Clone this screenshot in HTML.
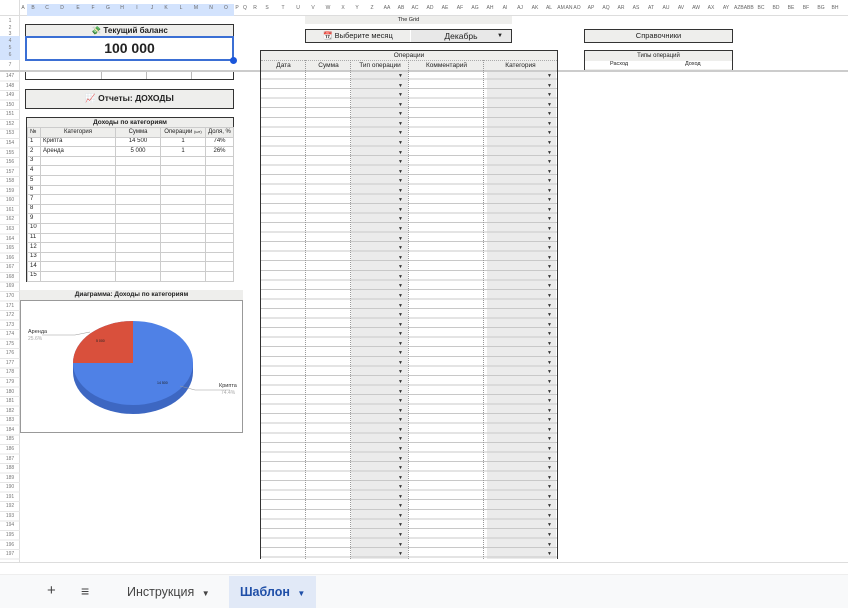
<!DOCTYPE html>
<html><head><meta charset="utf-8"><style>
*{margin:0;padding:0;box-sizing:border-box}
body{width:848px;height:608px;overflow:hidden;background:#fff;font-family:"Liberation Sans",Arial,sans-serif;position:relative;color:#222}
.a{position:absolute}
.ch{position:absolute;top:5px;font-size:5px;color:#666;text-align:center;width:14px;margin-left:-7px}
.rn{position:absolute;left:0;width:20px;font-size:5px;color:#777;text-align:center}
.box{position:absolute;border:1.5px solid #333;background:#eeeeec}
.c{text-align:center}
.t{border-collapse:collapse;position:absolute;table-layout:fixed}
.t tr{height:9.6px}
.t td{border:1px solid #ccc;font-size:6px;padding:0 2px;line-height:7.5px;white-space:nowrap;overflow:hidden}
.col{position:absolute;font-size:6px;color:#333;line-height:9.56px;text-align:right}
</style></head><body>
<div class="a" style="left:0;top:0;width:848px;height:16px;background:#fff;border-bottom:1px solid #ddd"></div>
<div class="a" style="left:27px;top:4px;width:207px;height:12px;background:#d3e3fd"></div>
<div class="a" style="left:0;top:0;width:20px;height:608px;border-right:1px solid #ddd"></div>
<div class="ch" style="left:23px">A</div><div class="ch" style="left:33px">B</div><div class="ch" style="left:47px">C</div><div class="ch" style="left:62px">D</div><div class="ch" style="left:78px">E</div><div class="ch" style="left:93px">F</div><div class="ch" style="left:108px">G</div><div class="ch" style="left:122px">H</div><div class="ch" style="left:137px">I</div><div class="ch" style="left:152px">J</div><div class="ch" style="left:166px">K</div><div class="ch" style="left:181px">L</div><div class="ch" style="left:196px">M</div><div class="ch" style="left:211px">N</div><div class="ch" style="left:226px">O</div><div class="ch" style="left:237px">P</div><div class="ch" style="left:245px">Q</div><div class="ch" style="left:255px">R</div><div class="ch" style="left:267px">S</div><div class="ch" style="left:283px">T</div><div class="ch" style="left:298px">U</div><div class="ch" style="left:313px">V</div><div class="ch" style="left:328px">W</div><div class="ch" style="left:343px">X</div><div class="ch" style="left:357px">Y</div><div class="ch" style="left:372px">Z</div><div class="ch" style="left:387px">AA</div><div class="ch" style="left:401px">AB</div><div class="ch" style="left:415px">AC</div><div class="ch" style="left:430px">AD</div><div class="ch" style="left:445px">AE</div><div class="ch" style="left:460px">AF</div><div class="ch" style="left:475px">AG</div><div class="ch" style="left:490px">AH</div><div class="ch" style="left:505px">AI</div><div class="ch" style="left:520px">AJ</div><div class="ch" style="left:535px">AK</div><div class="ch" style="left:549px">AL</div><div class="ch" style="left:561px">AM</div><div class="ch" style="left:569px">AN</div><div class="ch" style="left:577px">AO</div><div class="ch" style="left:591px">AP</div><div class="ch" style="left:606px">AQ</div><div class="ch" style="left:621px">AR</div><div class="ch" style="left:636px">AS</div><div class="ch" style="left:651px">AT</div><div class="ch" style="left:666px">AU</div><div class="ch" style="left:681px">AV</div><div class="ch" style="left:696px">AW</div><div class="ch" style="left:711px">AX</div><div class="ch" style="left:726px">AY</div><div class="ch" style="left:741px">AZBABB</div><div class="ch" style="left:761px">BC</div><div class="ch" style="left:776px">BD</div><div class="ch" style="left:791px">BE</div><div class="ch" style="left:806px">BF</div><div class="ch" style="left:821px">BG</div><div class="ch" style="left:835px">BH</div>
<div class="a" style="left:0;top:36px;width:20px;height:24px;background:#d3e3fd"></div>
<div class="rn" style="top:18px">1</div><div class="rn" style="top:25px">2</div><div class="rn" style="top:31px">3</div><div class="rn" style="top:38px">4</div><div class="rn" style="top:45px">5</div><div class="rn" style="top:52px">6</div><div class="rn" style="top:62px">7</div>
<div class="a" style="left:0;top:70px;width:848px;height:2px;background:#ccc"></div>
<div class="a" style="left:0;top:72px;width:20px;font-size:5px;color:#777;text-align:center;line-height:9.56px">147<br>148<br>149<br>150<br>151<br>152<br>153<br>154<br>155<br>156<br>157<br>158<br>159<br>160<br>161<br>162<br>163<br>164<br>165<br>166<br>167<br>168<br>169<br>170<br>171<br>172<br>173<br>174<br>175<br>176<br>177<br>178<br>179<br>180<br>181<br>182<br>183<br>184<br>185<br>186<br>187<br>188<br>189<br>190<br>191<br>192<br>193<br>194<br>195<br>196<br>197</div>
<div class="a" style="left:0;top:72px;width:20px;height:488px;background:repeating-linear-gradient(#0000 0 8.56px,#e6e6e6 8.56px 9.56px)"></div>
<div class="box" style="left:25px;top:24px;width:209px;height:13px;font-size:8px;font-weight:bold;text-align:center;line-height:11px">💸 Текущий баланс</div>
<div class="a" style="left:25px;top:36px;width:209px;height:25px;border:2px solid #3b6fd4;background:#fff;font-size:14px;font-weight:bold;text-align:center;line-height:21px">100 000</div>
<div class="a" style="left:230px;top:57px;width:7px;height:7px;border-radius:50%;background:#1a56db"></div>
<div class="a" style="left:25px;top:72px;width:209px;height:8px;border:1.5px solid #333;border-top:none;background:linear-gradient(90deg,#0000 75px,#bbb 75px 76px,#0000 76px 120px,#bbb 120px 121px,#0000 121px 165px,#bbb 165px 166px,#0000 166px)"></div>
<div class="box" style="left:25px;top:89px;width:209px;height:20px;font-size:8.5px;font-weight:bold;text-align:center;line-height:17px">📈 Отчеты: ДОХОДЫ</div>
<div class="a" style="left:26px;top:117px;width:208px;height:165px;border:1.5px solid #333"></div>
<div class="a" style="left:27px;top:118px;width:206px;height:9px;background:#eeeeec;font-size:6.5px;font-weight:bold;text-align:center;line-height:9px">Доходы по категориям</div>
<table class="t" style="left:27px;top:127px;width:206px">
<colgroup><col style="width:13px"><col style="width:75px"><col style="width:45px"><col style="width:45px"><col style="width:28px"></colgroup>
<tr style="background:#eeeeec"><td>№</td><td class="c">Категория</td><td class="c">Сумма</td><td class="c">Операции <span style="font-size:4px">(шт)</span></td><td class="c" style="padding:0">Доля, %</td></tr>
<tr><td>1</td><td>Крипта</td><td class="c">14 500</td><td class="c">1</td><td class="c">74%</td></tr>
<tr><td>2</td><td>Аренда</td><td class="c">5 000</td><td class="c">1</td><td class="c">26%</td></tr>
<tr><td>3</td><td></td><td></td><td></td><td></td></tr><tr><td>4</td><td></td><td></td><td></td><td></td></tr><tr><td>5</td><td></td><td></td><td></td><td></td></tr><tr><td>6</td><td></td><td></td><td></td><td></td></tr><tr><td>7</td><td></td><td></td><td></td><td></td></tr><tr><td>8</td><td></td><td></td><td></td><td></td></tr><tr><td>9</td><td></td><td></td><td></td><td></td></tr><tr><td>10</td><td></td><td></td><td></td><td></td></tr><tr><td>11</td><td></td><td></td><td></td><td></td></tr><tr><td>12</td><td></td><td></td><td></td><td></td></tr><tr><td>13</td><td></td><td></td><td></td><td></td></tr><tr><td>14</td><td></td><td></td><td></td><td></td></tr><tr><td>15</td><td></td><td></td><td></td><td></td></tr>
</table>
<div class="a" style="left:20px;top:290px;width:223px;height:10px;background:#eeeeec;font-size:6.5px;font-weight:bold;text-align:center;line-height:10px">Диаграмма: Доходы по категориям</div>
<div class="a" style="left:20px;top:300px;width:223px;height:133px;border:1px solid #999;background:#fff"></div>
<svg class="a" style="left:20px;top:300px" width="223" height="133">
<path d="M53 63 v9 a60 42 0 0 0 120 0 v-9 z" fill="#3d67c2"/>
<ellipse cx="113" cy="63" rx="60" ry="42" fill="#4f81e6"/>
<path d="M113 63 L113 21 A60 42 0 0 0 53 63 Z" fill="#d9503c"/>
<path d="M22 35 H55 L70 32" stroke="#999" stroke-width="0.6" fill="none"/>
<path d="M160 86 L175 90 H210" stroke="#999" stroke-width="0.6" fill="none"/>
<text x="8" y="33" font-size="5.5" fill="#333">Аренда</text><text x="8" y="40" font-size="5" fill="#aaa">25.6%</text>
<text x="199" y="87" font-size="5.5" fill="#333">Крипта</text><text x="201" y="94" font-size="5" fill="#aaa">74.4%</text>
<text x="76" y="42" font-size="3.5" fill="#222">5 000</text>
<text x="137" y="84" font-size="3.5" fill="#222">14 500</text>
</svg>
<div class="a" style="left:305px;top:16px;width:207px;height:8px;background:#eeeeec;font-size:5.5px;text-align:center;line-height:8px">The Grid</div>
<div class="box" style="left:305px;top:29px;width:207px;height:14px;border-width:1.2px"></div>
<div class="a" style="left:306px;top:30px;width:104px;height:12px;font-size:7.5px;text-align:center;line-height:12px">📆 Выберите месяц</div>
<div class="a" style="left:410px;top:30px;width:101px;height:12px;background:#e8e8e8;border-left:1px solid #fff;font-size:8.5px;text-align:center;line-height:12px">Декабрь<span style="position:absolute;right:8px;font-size:6px">▼</span></div>
<div class="a" style="left:260px;top:50px;width:298px;height:509px;border:1.2px solid #333;border-bottom:none"></div>
<div class="a" style="left:261px;top:51px;width:296px;height:19px;background:#eeeeec;font-size:6.5px;text-align:center;line-height:9px">Операции</div>
<div class="a" style="left:261px;top:60px;width:296px;height:10px;font-size:6.5px;line-height:10px;border-top:1px dotted #aaa">
<span class="a c" style="left:0;width:45px">Дата</span><span class="a c" style="left:45px;width:45px">Сумма</span><span class="a c" style="left:90px;width:58px">Тип операции</span><span class="a c" style="left:148px;width:75px">Комментарий</span><span class="a c" style="left:223px;width:73px">Категория</span></div>
<div class="a" style="left:351px;top:72px;width:57px;height:487px;background:#ebebeb"></div>
<div class="a" style="left:487px;top:72px;width:69px;height:487px;background:#ebebeb"></div>
<div class="a" style="left:261px;top:70px;width:296px;height:489px;background:repeating-linear-gradient(#0000 0 8.56px,#c8c8c8 8.56px 9.56px)"></div>
<div class="a" style="left:305px;top:60px;width:1px;height:499px;border-left:1px dotted #999"></div>
<div class="a" style="left:350px;top:60px;width:1px;height:499px;border-left:1px dotted #999"></div>
<div class="a" style="left:408px;top:60px;width:1px;height:499px;border-left:1px dotted #999"></div>
<div class="a" style="left:483px;top:60px;width:1px;height:499px;border-left:1px dotted #999"></div>
<div class="col" style="left:380px;top:72px;width:23px;font-size:5px">▼<br>▼<br>▼<br>▼<br>▼<br>▼<br>▼<br>▼<br>▼<br>▼<br>▼<br>▼<br>▼<br>▼<br>▼<br>▼<br>▼<br>▼<br>▼<br>▼<br>▼<br>▼<br>▼<br>▼<br>▼<br>▼<br>▼<br>▼<br>▼<br>▼<br>▼<br>▼<br>▼<br>▼<br>▼<br>▼<br>▼<br>▼<br>▼<br>▼<br>▼<br>▼<br>▼<br>▼<br>▼<br>▼<br>▼<br>▼<br>▼<br>▼<br>▼</div>
<div class="col" style="left:530px;top:72px;width:22px;font-size:5px">▼<br>▼<br>▼<br>▼<br>▼<br>▼<br>▼<br>▼<br>▼<br>▼<br>▼<br>▼<br>▼<br>▼<br>▼<br>▼<br>▼<br>▼<br>▼<br>▼<br>▼<br>▼<br>▼<br>▼<br>▼<br>▼<br>▼<br>▼<br>▼<br>▼<br>▼<br>▼<br>▼<br>▼<br>▼<br>▼<br>▼<br>▼<br>▼<br>▼<br>▼<br>▼<br>▼<br>▼<br>▼<br>▼<br>▼<br>▼<br>▼<br>▼<br>▼</div>
<div class="box" style="left:584px;top:29px;width:149px;height:14px;font-size:7.5px;text-align:center;line-height:11px">Справочники</div>
<div class="box" style="left:584px;top:50px;width:149px;height:20px;font-size:6px;border-bottom:none"><div style="text-align:center;line-height:10px">Типы операций</div><div style="background:#fff;height:8px;position:relative;font-size:5.5px"><span class="a" style="left:25px;top:0">Расход</span><span class="a" style="left:100px;top:0">Доход</span></div></div>
<div class="a" style="left:0;top:562px;width:848px;height:13px;border-top:1px solid #ddd;border-bottom:1px solid #eee;background:#fff"></div>
<div class="a" style="left:0;top:575px;width:848px;height:33px;background:#f8f9fa"></div>
<div class="a" style="left:47px;top:582px;font-size:15px;color:#444">+</div>
<div class="a" style="left:81px;top:583px;font-size:14px;color:#444">≡</div>
<div class="a" style="left:127px;top:585px;font-size:12.5px;color:#444">Инструкция <span style="font-size:8px;margin-left:4px">▼</span></div>
<div class="a" style="left:229px;top:576px;width:87px;height:32px;background:#e1e9f7"></div>
<div class="a" style="left:240px;top:585px;font-size:12.5px;color:#1f4fa8;font-weight:bold">Шаблон <span style="font-size:8px;margin-left:4px;font-weight:normal">▼</span></div>
</body></html>
